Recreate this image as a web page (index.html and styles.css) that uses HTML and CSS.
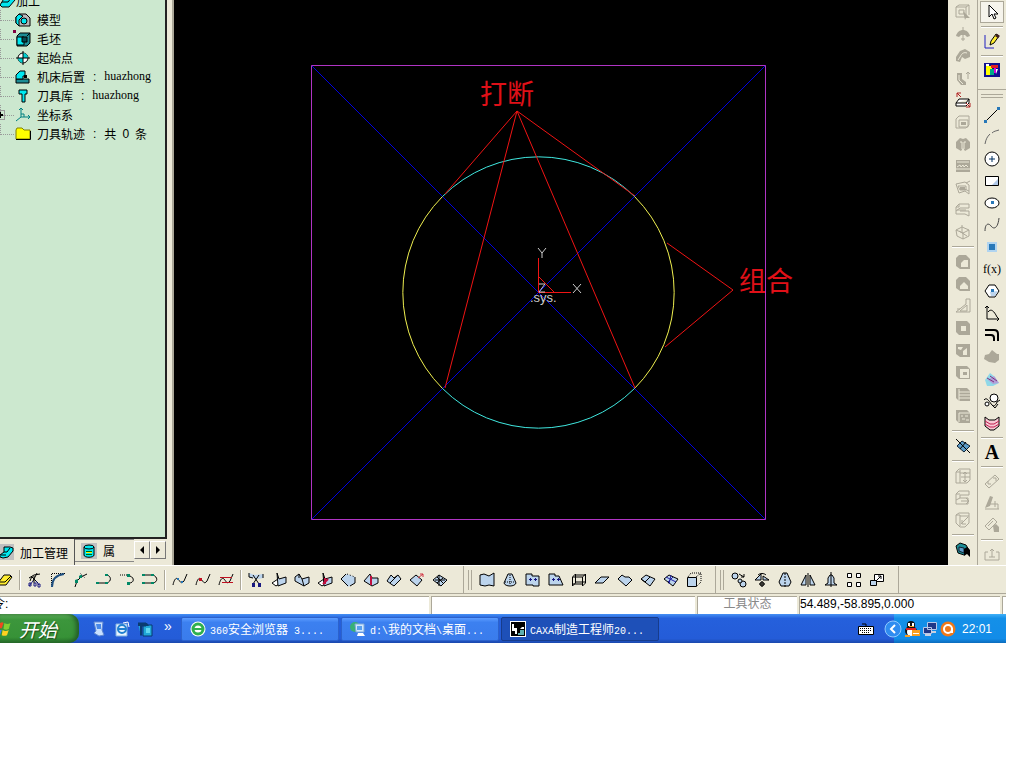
FILE: index.html
```html
<!DOCTYPE html>
<html lang="zh-CN">
  <head>
    <meta charset="utf-8">
    <title>CAXA制造工程师</title>
    <link rel="stylesheet" href="styles.css">
  </head>
  <body>
    <div class="screen">
      <div class="workspace">
        <aside class="panel">
          <ul class="tree">
            <li class="root">
              <svg viewBox="0 0 16 16"><path class="k cy" d="M0 12L5 4h7l3 3-6 7H2z"/><path class="k" d="M2 9h6l4-5"/></svg>
              <span>加工</span>
            </li>
            <li>
              <svg viewBox="0 0 16 16"><path class="k gr" d="M1 5l3-3h7l4 4v8H4l-3-3z"/><path class="k cy" d="M1 5l3-3 4 2-4 4v6l-3-3z"/><circle class="k cy" cx="9" cy="9" r="3"/></svg>
              <span>模型</span>
            </li>
            <li>
              <svg viewBox="0 0 16 16"><path class="k tl" d="M2 5l3-3h10v10l-3 3H2z"/><path class="k cy" d="M2 6h7v8H2z"/><path class="k dk" d="M7 6h5v5H7zM12 5l3-3"/><path fill="#800040" d="M-2-1h3v3h-3z"/></svg>
              <span>毛坯</span>
            </li>
            <li>
              <svg viewBox="0 0 16 16"><circle class="k wh" cx="8" cy="8" r="5"/><path fill="#00d0d0" d="M8 8V3a5 5 0 0 1 5 5zM8 8v5a5 5 0 0 1-5-5z"/><path class="k" d="M1 8h14M8 1v14"/></svg>
              <span>起始点</span>
            </li>
            <li>
              <svg viewBox="0 0 16 16"><path class="k tl" d="M1 10h13v4H1z"/><path class="k cy" d="M1 10V6l4-4h5v5H8v3z"/><path d="M9 6h3v3H9z"/></svg>
              <span>机床后置</span><span class="colon">:</span><span class="latin">huazhong</span>
            </li>
            <li>
              <svg viewBox="0 0 16 16"><path class="k cy" d="M4 2h8v4h-2v8H7V6H4z"/></svg>
              <span>刀具库</span><span class="colon">:</span><span class="latin">huazhong</span>
            </li>
            <li>
              <svg viewBox="0 0 16 16"><path fill="none" stroke="#008080" d="M6 1v9h9M6 10l-5 4M4 3l2-2 2 2M13 8l2 2-2 2M6 7h3v3"/></svg>
              <span>坐标系</span>
              <button class="expand" title="展开"><svg viewBox="0 0 8 8"><path d="M1 3h6v2H1zM3 1h2v6H3z"/></svg></button>
            </li>
            <li>
              <svg viewBox="0 0 16 16"><path fill="#ff0" stroke="#808000" d="M1 4l1-2h5l2 2h6v9H1z"/><path class="k" d="M1 13.500h14.500V5"/></svg>
              <span>刀具轨迹</span><span class="colon">:</span><span>共</span><span>0</span><span>条</span>
            </li>
          </ul>
          <div class="tabs">
            <button class="tab active">
              <svg class="boxed" viewBox="0 0 16 16"><path class="k cy" d="M2 11l4-3V3h6l3 1v3l-5 6-5 1-3-1z"/><path class="k" d="M6 8h3l3-4M3 11h5"/></svg>
              加工管理
            </button>
            <button class="tab">
              <svg class="boxed" viewBox="0 0 16 16"><path class="k cy" d="M3 4v8c0 3 10 3 10 0V4"/><ellipse class="k cy" cx="8" cy="4" rx="5" ry="2"/><path d="M5 8h6v1H5zM5 11h6v1H5z" fill="#060"/><path d="M5 9h6v1H5z" fill="#fe0"/></svg>
              属
            </button>
            <div class="tab-scroll">
              <button title="左"><svg viewBox="0 0 8 8"><path d="M6 0v8L2 4z"/></svg></button>
              <button title="右"><svg viewBox="0 0 8 8"><path d="M2 0v8l4-4z"/></svg></button>
            </div>
          </div>
        </aside>

        <main class="viewport">
          <svg class="drawing" viewBox="174 0 774 565">
            <g class="lines">
              <path stroke="#0000e0" d="M311.500 65.500l454 454M765.500 65.500l-454 454"/>
              <path stroke="#b034c4" d="M311.500 65.500h454v454h-454z"/>
              <path stroke="#f0f050" d="M442.500 196.500a136 136 0 0 0 0 192M634.500 196.500a136 136 0 0 1 0 192"/>
              <path stroke="#40e8e0" d="M442.500 196.500a136 136 0 0 1 192 0M442.500 388.500a136 136 0 0 0 192 0"/>
              <path stroke="#f01414" d="M445 194l72-83-72 277M517 111l118 277M517 111l118 85"/>
              <path stroke="#f01414" d="M667 243l66 47-68 57"/>
              <path stroke="#f01414" d="M538.500 258v34.500H571M538 276l16 16"/>
            </g>
            <text class="note" x="480" y="104">打断</text>
            <text class="note" x="739" y="291">组合</text>
            <g class="axis">
              <path d="M538 248l4 5 4-5M542 253v5M573 284l8 9M581 284l-8 9M539 284h6l-6 8h6"/>
              <text x="530" y="302">.sys.</text>
            </g>
          </svg>
        </main>

        <nav class="tools features">
          <button><svg viewBox="0 0 16 16"><path class="g" d="M1 3l3-2h10v10M1 3h10v10H1zM11 3l3-2M4 6h5v4H4z"/><path class="gf" d="M8 7l7 7h-4l-1 2z"/></svg></button>
          <button><svg viewBox="0 0 16 16"><path class="gf" d="M1 10c1-4 4-6 7-6s6 2 7 6l-3 1-2-2H6l-2 2z"/><path class="g" d="M8 1v14M6 13h4"/></svg></button>
          <button><svg viewBox="0 0 16 16"><path class="gf" d="M1 9l4-6 5-2 5 3v5l-5 2-3-2-2 5-4-1z"/><path class="w" d="M5 9c2-4 4-5 7-4M3 12l2-3"/></svg></button>
          <button><svg viewBox="0 0 16 16"><path class="gf" d="M2 3h5v6l4 3v3H6l-4-5z"/><path class="w" d="M4 5v5l4 4"/><path class="g" d="M13 9V2m-2 2l2-2 2 2"/></svg></button>
          <button><svg viewBox="0 0 16 16"><path class="k wh" d="M1 11l3-4h10l-3 4zM1 11v3h10l3-3V7"/><path fill="none" stroke="#b02020" d="M2 1l4 4M2 5V1h4M15 15l-4-4M15 11v4h-4"/></svg></button>
          <button><svg viewBox="0 0 16 16"><path class="g" d="M1 5l3-3h10v9l-3 3H1zM4 6h9v7H4z"/><path class="gf" d="M6 8h5v3H6z"/></svg></button>
          <button><svg viewBox="0 0 16 16"><path class="gf" d="M1 6l4-4 3 1 3-1 4 4v6l-5 3-2-3-2 3-5-3z"/><path class="w" d="M5 6h2v7M11 6H9v7"/></svg></button>
          <button><svg viewBox="0 0 16 16"><path class="gf" d="M1 2h14v12H1z"/><path class="w" d="M2 9l3-2 1 2 2-2 1 2 2-2 2 2M1 11h14M2 4h12"/></svg></button>
          <button><svg viewBox="0 0 16 16"><path class="g" d="M1 4l9-2 4 3v9l-4-3-6 2zM3 6h8v4H5zM11 3l4-2M7 8l7 3"/><path class="gf" d="M5 7h5v3H5z"/></svg></button>
          <button><svg viewBox="0 0 16 16"><path class="g" d="M1 5l3-3h10v4H5L1 9zM1 9v3h9l4 2V9H5M4 2v3H1M2 8h9"/></svg></button>
          <button><svg viewBox="0 0 16 16"><path class="g" d="M1 6l6-3 7 3v6l-6 3-6-3zM1 6l7 3 6-3M8 9v6M7 1v8M4 7l8 5"/></svg></button>
          <hr>
          <button><svg viewBox="0 0 16 16"><path class="gf" d="M1 4l3-3h7l4 4v10H5l-4-3z"/><path class="bg" d="M6 13V9l3-3h4v7z"/></svg></button>
          <button><svg viewBox="0 0 16 16"><path class="gf" d="M1 4l3-3h7l4 4v10H5l-4-3z"/><path class="bg" d="M5 13v-3l4-4 4 4v3z"/></svg></button>
          <button><svg viewBox="0 0 16 16"><path class="g" d="M1 14l10-8V1h4v13zM5 13l7-6v6zM2 11h3"/></svg></button>
          <button><svg viewBox="0 0 16 16"><path class="gf" d="M1 1h11l3 3v11H4l-3-3z"/><path class="bg" d="M6 6h5v5H6z"/></svg></button>
          <button><svg viewBox="0 0 16 16"><path class="gf" d="M1 2h14v13H5l-4-3z"/><path class="bg" d="M3 5h5L6 8 3 7zM8 9l4-3v7H8z"/></svg></button>
          <button><svg viewBox="0 0 16 16"><path class="gf" d="M1 2h11l3 3v10H4l-3-3z"/><path class="bg" d="M5 5h9v9H5z"/><path class="gf" d="M8 8h4v3H8z"/></svg></button>
          <button><svg viewBox="0 0 16 16"><path class="gf" d="M1 2h11l3 3v10H4l-3-3z"/><path class="w" d="M4 6h11M4 9h11M4 12h11M4 3v12"/></svg></button>
          <button><svg viewBox="0 0 16 16"><path class="gf" d="M1 2h11l3 3v10H4l-3-3z"/><path class="w" d="M4 5h11M6 8h2M10 8h3M7 11h3M11 12h3M4 5v9"/></svg></button>
          <hr>
          <button><svg viewBox="0 0 16 16"><path class="bl" d="M2 8l5-5 8 5-6 6z"/><path class="k" d="M1 1l14 14M11 4l-6 7"/></svg></button>
          <hr>
          <button><svg viewBox="0 0 16 16"><path class="g" d="M1 4l3-3h11v11l-3 3H1zM1 4h4M5 5h10M5 2v13M10 4v10M6 9h9M8 6l2-2 2 2M8 12l2 2 2-2"/></svg></button>
          <button><svg viewBox="0 0 16 16"><path class="g" d="M1 4l3-3h10v4H5v3h8v6H1zM1 4h4M5 8l-4 2M6 11h8M11 8l3 3-3 3"/></svg></button>
          <button><svg viewBox="0 0 16 16"><path class="g" d="M1 3l3-2h10v10l-4 4H5l-4-4zM1 3h4v11M5 4h9M6 12l7-7M7 8v4h4"/></svg></button>
          <hr>
          <button><svg viewBox="0 0 16 16"><path class="k tl" d="M1 4l4-3 6 2 3 5-5 5-6-2z"/><path class="bl" d="M4 5l5 1v5L4 9z"/><path d="M9 7l3-2 3 3v7l-3-3-3 2z"/></svg></button>
        </nav>

        <nav class="tools curves">
          <button class="pressed" title="选择"><svg viewBox="0 0 16 16"><path class="k wh" d="M5 1v12l3-3 2 5 2-1-2-4h4z"/></svg></button>
          <hr>
          <button><svg viewBox="0 0 16 16"><path fill="none" stroke="#2020c0" d="M1 2v13h9"/><path class="k ye" d="M6 12l1-4 5-7 3 2-5 7z"/><path stroke="#402020" stroke-width="3" d="M12 2l3 2"/></svg></button>
          <hr>
          <button><svg viewBox="0 0 16 16"><path fill="#101090" d="M0 1h16v14H0z"/><path fill="#ff0" d="M2 4h6v9H2z"/><path fill="#0a8" d="M6 7h4v6H6z"/><path fill="#e02020" d="M7 3h7v3H7z"/><path fill="#fff" d="M2 2h3v2H2zM11 7h3l-2 5z"/><path fill="#d0d" d="M10 6h2v5h-2z"/></svg></button>
          <span class="section-end"></span>
          <button><svg viewBox="0 0 16 16"><path class="k" d="M2 14L14 2"/><path class="nb" d="M0 13h3v3H0zM13 0h3v3h-3z"/></svg></button>
          <button><svg viewBox="0 0 16 16"><path fill="none" stroke="#666" d="M1 15c1-5 2-7 5-10M8 4c2-2 4-2 7-3"/></svg></button>
          <button><svg viewBox="0 0 16 16"><circle class="k wh" cx="8" cy="8" r="7"/><path stroke="#003060" d="M5 8h6M8 5v6"/></svg></button>
          <button><svg viewBox="0 0 16 16"><path class="k wh" d="M1.500 3.500h13v9h-13z"/><path fill="#b0c8e8" d="M8 12l6-6v6z"/></svg></button>
          <button><svg viewBox="0 0 16 16"><ellipse class="k wh" cx="8" cy="8" rx="7" ry="5"/><path class="nb" d="M7 6h3v3H7z"/></svg></button>
          <button><svg viewBox="0 0 16 16"><path fill="none" stroke="#444" d="M1 14c0-8 4-8 6-5 3 4 7 2 8-8"/></svg></button>
          <button><svg viewBox="0 0 16 16"><path fill="#b0d4f0" d="M3 3h10v10H3z"/><path class="nb" d="M5 5h6v6H5z"/></svg></button>
          <button class="fx">f(x)</button>
          <button><svg viewBox="0 0 16 16"><path class="k wh" d="M5 2h6l4 6-4 6H5L1 8z"/><path class="lb" d="M6 9l8-1-3 5H7z"/><path class="nb" d="M7 6h3v3H7z"/></svg></button>
          <button><svg viewBox="0 0 16 16"><path class="k" d="M3 1v13h12M1 3l2-2 2 2M13 12l2 2-2 2M4 7c3-4 6-1 9 5"/></svg></button>
          <button><svg viewBox="0 0 16 16"><path fill="none" stroke="#000" stroke-width="2" d="M1 3h9q4 0 4 4v7M1 8h6q3 0 3 3v3"/></svg></button>
          <button><svg viewBox="0 0 16 16"><path class="gf" d="M1 6l4-1 3-4 5 4h2v6l-4 3-6-1-5-3z"/></svg></button>
          <button><svg viewBox="0 0 16 16"><path fill="#90d8e8" d="M1 9l5-7 5 4 4 6-6 3H3z"/><path fill="#b0a0d8" d="M4 9l6-4 5 7-6 1z"/><path fill="none" stroke="#803080" d="M3 7l7 4M6 5l7 5"/></svg></button>
          <button><svg viewBox="0 0 16 16"><circle class="k wh" cx="10" cy="5" r="4"/><circle class="k wh" cx="3" cy="11" r="2"/><path class="k" d="M0 7c3-4 6 3 8 5s4 0 5-3l3-2M8 12l3 3 3-4"/></svg></button>
          <button><svg viewBox="0 0 16 16"><path class="k pk" d="M1 2l4 3h6l4-3v9l-5 4H6l-5-4z"/><path fill="none" stroke="#c02050" d="M1 6l5 3h4l5-3M1 9l5 3h4l5-3"/></svg></button>
          <hr>
          <button class="letter">A</button>
          <hr>
          <button><svg viewBox="0 0 16 16"><path class="g" d="M1 11l10-9 4 4-10 9zM4 8v3h3M9 5h3v3"/></svg></button>
          <button><svg viewBox="0 0 16 16"><path class="gf" d="M1 13L6 1l3 1-3 9z"/><path class="g" d="M1 14h14M6 9h8M14 9v5M11 6v6"/></svg></button>
          <button><svg viewBox="0 0 16 16"><path class="g" d="M1 9l8-8 4 4-8 8zM4 9l5-5"/><path class="gf" d="M9 9l3-2 3 3v5h-5z"/></svg></button>
          <hr>
          <button><svg viewBox="0 0 16 16"><path class="g" d="M1 6v8h14V6M1 6h3M12 6h3M8 3v8M6 5l2-2 2 2M5 11h6"/></svg></button>
        </nav>
      </div>

      <div class="toolbar">
        <div class="group first">
          <button><svg viewBox="0 0 16 16"><path class="k ye" d="M1 11l6-8h6l2 2-6 8H3z"/><path class="k" d="M2 10h6l6-6"/></svg></button>
          <i class="divider"></i>
          <button><svg viewBox="0 0 16 16"><path class="k" d="M10 1L6 9M2 6l5-3 6-1M5 5l6 6M7 4v7M3 9l2-5"/><path fill="none" stroke="#181880" d="M6 9l-4 5M9 9l3 4M2 11h2v3H2zM11 12h2v3h-2zM7 11h2v3H7z"/></svg></button>
          <button><svg viewBox="0 0 16 16"><path class="k" stroke-dasharray="1 1" d="M1.500 15V1.500H15"/><path fill="none" stroke="#205080" stroke-width="2" d="M2 15C2 8 6 3 14 2"/></svg></button>
          <button><svg viewBox="0 0 16 16"><path class="k" d="M2 15l2-6 4-4 6-3"/><path fill="#086" d="M2 8l3-1v4H2zM6 4l3-2v4H6z"/><path fill="none" stroke="#888" d="M7 1l5 5"/></svg></button>
          <button><svg viewBox="0 0 16 16"><path class="k" d="M1 11h10c5-2 4-7 0-8"/><path fill="#086" d="M0 10h3v2H0zM9 10h3v2H9zM9 2h3v2H9z"/></svg></button>
          <button><svg viewBox="0 0 16 16"><path class="k" stroke-dasharray="1 1" d="M1 3h8"/><path class="k" d="M11 4c5 2 4 7-1 7"/><path fill="#086" d="M8 2h3v3H8zM8 10h3v3H8z"/></svg></button>
          <button><svg viewBox="0 0 16 16"><path class="k" d="M1 3h10c5 2 5 7 0 8H1"/><path fill="#086" d="M0 2h3v2H0zM9 2h3v2H9zM0 10h3v2H0zM9 10h3v2H9z"/></svg></button>
          <i class="divider"></i>
          <button><svg viewBox="0 0 16 16"><path class="k" d="M1 13c1-5 3-8 5-6s3 6 6 2l3-7"/><path class="nb" d="M5 6h2v2H5zM9 9h2v2H9z"/></svg></button>
          <button><svg viewBox="0 0 16 16"><path class="k" d="M1 13c1-5 3-8 5-6s3 6 6 2l3-7"/><path fill="#c01020" d="M4 6h3v3H4z"/></svg></button>
          <button><svg viewBox="0 0 16 16"><path class="k" d="M1 13c1-5 3-8 5-6s3 6 6 2l3-7"/><path stroke="#c01020" d="M2 5.500h12M4 10.500h11"/></svg></button>
          <i class="divider"></i>
          <button><svg viewBox="0 0 16 16"><path class="lb" d="M1 1l6 2 8-1v4l-5 1-4-1-5-1z"/><path class="k" d="M1 1v4l4 1M15 2v4M5 3l6 9M11 3L5 12"/><path class="nv" d="M4 11h3v4H4zM10 11h3v4h-3z"/></svg></button>
          <button><svg viewBox="0 0 16 16"><path class="k wh" d="M1 11l6-4 1 5-3 2z"/><path class="k lb" d="M6 1l2 6 7-2v6l-8 3z"/></svg></button>
          <button><svg viewBox="0 0 16 16"><path class="k lb" d="M1 5l4-3 3 5 7-2v6l-5 3-9-5z"/><path class="k" d="M8 7l2 7M5 2v4"/></svg></button>
          <button><svg viewBox="0 0 16 16"><path class="k wh" d="M1 11l6-4 1 5-3 2z"/><path class="k lb" d="M6 1l2 6 7-2v6l-8 3z"/><path fill="none" stroke="#c01040" stroke-width="2" d="M8 6v6M6 12l5-5"/></svg></button>
          <button><svg viewBox="0 0 16 16"><path class="lb" d="M1 7l6-5 8 3v6l-7 4z"/><path class="k" d="M6 2L1 7l7 7M15 5v6l-5 3"/><path class="k" stroke-dasharray="1 2" d="M7 2l8 3"/></svg></button>
          <button><svg viewBox="0 0 16 16"><path class="k lb" d="M1 9l6-7 2 4 6 0v5l-6 3z"/><path stroke="#c01040" stroke-width="2" d="M8 4v9"/></svg></button>
          <button><svg viewBox="0 0 16 16"><path class="k lb" d="M1 9l4-6 3 3 4-3 3 4-7 7-3-2z"/><path class="k" d="M4 11l7-7"/></svg></button>
          <button><svg viewBox="0 0 16 16"><path class="k lb" d="M1 8l6-5 6 5-5 6z"/><path fill="none" stroke="#d03040" d="M9 6l5-4M11 2h3v3"/></svg></button>
          <button><svg viewBox="0 0 16 16"><path class="k lb" d="M1 8l6-5 8 5-6 6z"/><path class="k" d="M3 8h10M7 3v11M5 5l6 6M5 11l6-5"/></svg></button>
        </div>
        <div class="group">
          <button><svg viewBox="0 0 16 16"><path class="k lb" d="M1 3l4-1 5 2 5-3v13l-5-1-4 1-5-1z"/></svg></button>
          <button><svg viewBox="0 0 16 16"><path class="k lb" d="M6 2h4l4 9c-1 4-11 4-12 0z"/><path class="k" stroke-dasharray="1 1" d="M8 3v10M3 10h10"/></svg></button>
          <button><svg viewBox="0 0 16 16"><path class="k lb" d="M1 2h6v2h7v10H8v-1H1z"/><path class="nv" d="M4 7h3v1H4zM9 7h3v1H9zM5 6h1v3H5zM10 6h1v3h-1z"/></svg></button>
          <button><svg viewBox="0 0 16 16"><path class="k lb" d="M1 2h6v2h4l4 9H1z"/><path class="nv" d="M4 7h3v1H4zM9 7h3v1H9zM5 6h1v3H5zM10 6h1v3h-1z"/></svg></button>
          <button><svg viewBox="0 0 16 16"><path class="k" d="M1.500 14V5l3-3v9zM11.500 14V5l3-3v9zM2 5h9M5 3h9M5 10h9M2 12h9"/></svg></button>
          <button><svg viewBox="0 0 16 16"><path class="k lb" d="M1 11l6-6h8l-6 6z"/></svg></button>
          <button><svg viewBox="0 0 16 16"><path class="k lb" d="M1 7l4-4 3 2h4l3 3-6 6z"/></svg></button>
          <button><svg viewBox="0 0 16 16"><path class="k lb" d="M1 7l5-4 9 4-5 7z"/><path class="k" d="M5 10l5-5M1 7l4 3"/></svg></button>
          <button><svg viewBox="0 0 16 16"><path class="k lb" d="M1 7l5-4 9 4-5 7z"/><path fill="none" stroke="#2020a0" d="M3 5l10 5M5 10l5-5M8 3l-2 9"/></svg></button>
          <button><svg viewBox="0 0 16 16"><path class="k lb" d="M1.500 5.500h9v9h-9z"/><path class="k" stroke-dasharray="1 1" d="M2 5l3-4h10v9l-4 4M10 5l5-4"/></svg></button>
        </div>
        <div class="group">
          <button><svg viewBox="0 0 16 16"><circle class="k lb" cx="4" cy="4" r="3"/><circle class="k lb" cx="12" cy="12" r="3"/><circle class="k lb" cx="9" cy="9" r="2"/><path class="k" d="M8 2l5 3M13 2v3h-3"/></svg></button>
          <button><svg viewBox="0 0 16 16"><path class="k lb" d="M7 2v6H1zM9 4l6 4H9z"/><path class="k" d="M4 3c2-2 6-2 8 0"/><circle class="k" cx="8" cy="12" r="2"/><path class="k" d="M8 9v6M5 12h6"/></svg></button>
          <button><svg viewBox="0 0 16 16"><path class="k lb" d="M6 1h4l4 9-2 4H4l-2-4z"/><path class="k" stroke-dasharray="2 1" d="M8 1v14"/></svg></button>
          <button><svg viewBox="0 0 16 16"><path class="k lb" d="M6 3v10H1zM10 3v10h5z"/><path class="k" d="M8 1v14"/></svg></button>
          <button><svg viewBox="0 0 16 16"><path class="k lb" d="M7 3L5 6v5l-3 2h12l-3-2V6L9 3z"/><path class="k" d="M8 0v15"/></svg></button>
          <button><svg viewBox="0 0 16 16"><path class="k wh" d="M1.500 1.500h4v4h-4zM10.500 1.500h4v4h-4zM1.500 10.500h4v4h-4zM10.500 10.500h4v4h-4z"/></svg></button>
          <button><svg viewBox="0 0 16 16"><path class="k wh" d="M5.500 2.500h9v7h-9z"/><path class="k lb" d="M1.500 8.500h6v5h-6z"/><path class="k" d="M7 9l5-5M9 4h3v3"/></svg></button>
        </div>
      </div>

      <div class="statusbar">
        <label class="command">令:<input type="text" aria-label="命令"></label>
        <div class="field hint"></div>
        <div class="field state">工具状态</div>
        <div class="field coords">54.489,-58.895,0.000</div>
        <div class="field edge"></div>
      </div>

      <footer class="taskbar">
        <button class="start">
          <svg viewBox="0 0 16 20"><path fill="#f04820" d="M0 3c2-1 3-1 4 0l-2 6H0z"/><path fill="#80d030" d="M5 3c3 2 5 1 7 0l-2 7c-2 1-4 1-6 0z"/><path fill="#4080f0" d="M0 11h2l-2 6z"/><path fill="#ffd020" d="M3 11c3 2 5 1 7 0l-2 6c-2 1-4 1-6 0z"/></svg>
          开始
        </button>
        <div class="quick">
          <button title="桌面"><svg viewBox="0 0 16 16"><path fill="#c8e0ff" stroke="#6088d0" d="M3 1h9l-1 8 2 5-5 1-5-3 2-2z"/><path fill="#4888e8" d="M5 3h5v5H6z"/></svg></button>
          <button title="浏览器"><svg viewBox="0 0 16 16"><path fill="#e8f4ff" stroke="#80b0e0" d="M2 3h11v12H2z"/><circle cx="8" cy="8" r="4" fill="none" stroke="#2080d0" stroke-width="2"/><path stroke="#2080d0" stroke-width="2" d="M5 8h7"/><path fill="none" stroke="#fff" d="M9 2l5-1 1 5"/></svg></button>
          <button title="窗口"><svg viewBox="0 0 16 16"><path fill="#20a8d8" stroke="#063870" d="M1 2h8v3H4v10M6 4h9v11H6z"/><path fill="#0a3c70" d="M1 2h9l2 3H5v9H3V5H1z"/><path fill="#60d8f0" d="M9 7h4v5H9z"/></svg></button>
          <span class="more">»</span>
        </div>
        <div class="tasks">
          <button class="task">
            <svg viewBox="0 0 16 16"><circle cx="8" cy="8" r="7.500" fill="#fff"/><circle cx="8" cy="8" r="5" fill="none" stroke="#30b050" stroke-width="3"/><path stroke="#30b050" stroke-width="2" d="M3 8h10"/></svg>
            <span><b>360</b>安全浏览器<b> 3....</b></span>
          </button>
          <button class="task">
            <svg viewBox="0 0 16 16"><circle cx="5" cy="6" r="5" fill="#38b078"/><path fill="#d0e8ff" stroke="#80a8d8" d="M5 3h9v8H6z"/><path fill="#58a0f0" d="M7 5h5v4H7z"/><path fill="#fff" d="M8 12h5l2 3H7z"/></svg>
            <span><b>d:\</b>我的文档<b>\</b>桌面<b>...</b></span>
          </button>
          <button class="task current">
            <svg viewBox="0 0 16 16"><path fill="#fff" d="M0 0h16v16H0z"/><path d="M1 1h14v14H1z"/><path fill="#fff" d="M2 3h2v4h3v6H5v-3H2zM10 8h4V6h-2z"/><path fill="#60b0b0" d="M10 9h4v5H8v-2h2z"/></svg>
            <span><b>CAXA</b>制造工程师<b>20...</b></span>
          </button>
        </div>
        <svg class="keyboard" viewBox="0 0 16 16"><path fill="#fff" stroke="#000" d="M.5 5.500h15v8H.5z"/><path stroke="#000" stroke-dasharray="1 1" d="M2 7.500h12M2 9.500h12M4 11.500h8"/><path class="k" d="M8 5V3H4"/></svg>
        <div class="tray">
          <button class="collapse" title="隐藏"><svg viewBox="0 0 18 18"><circle cx="9" cy="9" r="8" fill="#2f8cf0" stroke="#90c8ff"/><path fill="none" stroke="#fff" stroke-width="2" d="M11 5L7 9l4 4"/></svg></button>
          <svg viewBox="0 0 16 16"><ellipse cx="7" cy="10" rx="6" ry="5" fill="#111"/><circle cx="7" cy="4" r="4" fill="#111"/><ellipse cx="7" cy="11" rx="4" ry="4" fill="#fff"/><path fill="#fff" d="M4 2h2v3H4zM8 2h2v3H8z"/><path fill="#e02020" d="M2 7h10v2H2z"/><path fill="#f8a020" d="M5 5h5v1H5zM1 14h5v2H1zM8 9h8v6H8z"/><path stroke="#fff" d="M9 12.500h6"/></svg>
          <svg viewBox="0 0 16 16"><path fill="#203888" stroke="#b8c8e8" d="M5.500 1.500h9v7h-9zM1.500 6.500h8v6h-8z"/><path fill="#c8d0e0" d="M3 13h6v2H3zM9 10h5v2H9z"/></svg>
          <svg viewBox="0 0 16 16"><circle cx="8" cy="8" r="7.500" fill="#f07818"/><circle cx="8" cy="8" r="4" fill="none" stroke="#fff" stroke-width="2"/><path fill="#fff" d="M11 7h2v5h-2z"/></svg>
          <time>22:01</time>
        </div>
      </footer>
    </div>
  </body>
</html>
```

FILE: styles.css
```css
body {
  margin: 0;
  background-color: #fff;
  font-family: "Liberation Sans", "Noto Sans CJK SC", sans-serif;
  font-size: 12px;
  color: #000;
}

button {
  margin: 0;
  padding: 0;
  border: none;
  background: none;
  font: inherit;
  color: inherit;
}

svg {
  display: block;
  flex: none;
}

.screen {
  margin-right: 18px;
  background-color: #ece9d8;
  overflow: hidden;
}

.workspace {
  display: flex;
}

/* icon colours */
.k { fill: none; stroke: #000; }
.k.cy { fill: #00e8f0; }
.k.tl { fill: #1c8c94; }
.k.dk { fill: #064850; }
.k.gr { fill: #b8b8b8; }
.k.wh { fill: #fff; }
.k.ye { fill: #ffee30; }
.k.pk { fill: #f8c8d4; }
.lb,
.k.lb { fill: #bcd4ec; }
.bl { fill: #5c9cc8; stroke: #123; }
.nb { fill: #2878b8; }
.nv { fill: #181880; }
.g { fill: none; stroke: #aca899; }
.gf { fill: #aca899; }
.w { fill: none; stroke: #ece9d8; }
.bg { fill: #ece9d8; }

/* left panel */
.panel {
  display: flex;
  flex-direction: column;
  flex: none;
  width: 167px;
  margin-right: 5px;
}

.tree {
  flex: 1;
  margin: 0;
  padding: 0;
  list-style: none;
  background-color: #cce8cf;
  border-right: 2px solid #222;
  border-bottom: 2px solid #222;
  overflow: hidden;
}

.tree li {
  display: flex;
  align-items: center;
  position: relative;
  gap: 6px;
  height: 19px;
  padding-left: 15px;
  white-space: nowrap;
}

.tree li::before {
  content: "";
  position: absolute;
  left: 0;
  top: 0;
  width: 13px;
  height: 10px;
  border-left: 1px dotted #999;
  border-bottom: 1px dotted #999;
}

.tree .root {
  margin-top: -9px;
  padding-left: 0;
  gap: 0;
}

.tree .root::before {
  display: none;
}

.tree svg {
  width: 16px;
  height: 16px;
  overflow: visible;
}

.colon {
  margin: 0 2px;
}

.latin {
  font-family: "Liberation Serif", serif;
}

.expand {
  position: absolute;
  left: -5px;
  top: 5px;
  border: 1px solid #999;
}

.tree .expand svg {
  width: 8px;
  height: 8px;
}

.tabs {
  display: flex;
  height: 26px;
}

.tab {
  display: flex;
  align-items: center;
  gap: 6px;
  white-space: nowrap;
}

.tab svg {
  width: 16px;
  height: 16px;
}

.tab.active {
  width: 77px;
  margin-left: -2px;
  border-right: 1px solid #555;
}

.tab:not(.active) {
  width: 59px;
  height: 23px;
  padding-left: 6px;
  border-top: 1px solid #888;
  border-bottom: 1px solid #888;
  box-sizing: border-box;
}

.tab .boxed {
  background-color: #c0c0c0;
}

.tab-scroll {
  display: flex;
  height: 18px;
  margin-top: 2px;
}

.tab-scroll button {
  display: flex;
  align-items: center;
  justify-content: center;
  width: 16px;
  border: 1px solid;
  border-color: #fff #777 #777 #fff;
  box-sizing: border-box;
}

.tab-scroll svg {
  width: 8px;
  height: 8px;
}

/* drawing area */
.viewport {
  flex: 1;
  min-width: 0;
  background-color: #000;
  border-left: 2px solid #aca899;
}

.drawing {
  width: 100%;
}

.lines {
  fill: none;
}

.note {
  font-family: "Noto Sans CJK SC", sans-serif;
  font-size: 27px;
  fill: #e01018;
}

.axis path {
  fill: none;
  stroke: #ccc;
}

.axis text {
  font-size: 13px;
  fill: #ccc;
}

/* vertical toolbars */
.tools {
  display: flex;
  flex-direction: column;
  align-items: center;
  flex: none;
  width: 29px;
  padding-top: 1px;
  box-sizing: border-box;
}

.tools button {
  display: flex;
  align-items: center;
  justify-content: center;
  width: 24px;
  height: 22px;
}

.tools svg,
.toolbar svg {
  width: 16px;
  height: 16px;
}

.tools hr {
  width: 22px;
  height: 0;
  margin: 3px 0;
  border: none;
  border-top: 1px solid #aca899;
  border-bottom: 1px solid #fff;
}

.curves {
  border-left: 1px solid #aca899;
}

.curves hr {
  margin: 3px 0 2px;
}

.tools .pressed {
  background-color: #f6f4ec;
  border: 1px solid #aca899;
  box-sizing: border-box;
}

.section-end {
  align-self: stretch;
  height: 4px;
  margin-top: 8px;
  padding: 2px 3px 8px;
  border-top: 1px solid #aca899;
}

.section-end::after {
  content: "";
  display: block;
  height: 2px;
  margin-top: 2px;
  border-top: 1px solid #aca899;
  border-bottom: 1px solid #aca899;
}

.tools .fx {
  font-family: "Liberation Serif", serif;
}

.tools .letter {
  font-family: "Liberation Serif", serif;
  font-size: 20px;
  font-weight: bold;
}

/* bottom toolbar */
.toolbar {
  display: flex;
  height: 27px;
  border-top: 1px solid #fff;
  border-bottom: 1px solid #aca899;
}

.group {
  display: flex;
  align-items: center;
  padding-right: 10px;
  border-right: 1px solid #aca899;
}

.group:not(.first)::before {
  content: "";
  width: 2px;
  height: 20px;
  margin: 0 3px 0 4px;
  border-left: 1px solid #aca899;
  border-right: 1px solid #aca899;
}

.group button {
  display: flex;
  align-items: center;
  justify-content: center;
  width: 23px;
  height: 23px;
}

.first {
  margin-left: -7px;
  padding-right: 12px;
}

.divider {
  width: 1px;
  height: 20px;
  margin: 0 2px 0 3px;
  border-right: 1px solid #fff;
  background-color: #aca899;
}

/* status bar */
.statusbar {
  display: flex;
  gap: 2px;
  height: 20px;
  padding-top: 2px;
  box-sizing: border-box;
  line-height: 15px;
}

.command,
.field {
  background-color: #fff;
  border-top: 1px solid #aca899;
  box-sizing: border-box;
  white-space: nowrap;
  overflow: hidden;
}

.field {
  border-left: 1px solid #aca899;
}

.command {
  display: flex;
  flex: 430;
  text-indent: -7px;
}

.command input {
  flex: 1;
  min-width: 0;
  border: none;
  outline: none;
  background: none;
}

.hint {
  flex: 263;
}

.state {
  width: 100px;
  color: #888;
  text-align: center;
}

.coords {
  width: 201px;
}

.edge {
  width: 4px;
}

/* taskbar */
.taskbar {
  display: flex;
  align-items: center;
  height: 29px;
  background: linear-gradient(#4590f4, #2560dc 15%, #245cd8 85%, #1b48ac);
  color: #fff;
}

.start {
  display: flex;
  align-items: center;
  gap: 5px;
  width: 79px;
  height: 29px;
  margin-right: 12px;
  border-radius: 0 10px 10px 0;
  background: linear-gradient(#62b45e, #3c963c 20%, #379237 80%, #27702a);
  box-shadow: inset -3px 0 4px #245c28;
  font-size: 19px;
  font-style: italic;
  text-shadow: 1px 1px 1px #1c4c1c;
  white-space: nowrap;
}

.start svg {
  width: 14px;
  height: 20px;
}

.quick {
  display: flex;
  align-items: center;
  gap: 7px;
  width: 90px;
}

.quick svg,
.task svg,
.tray svg,
.keyboard {
  width: 16px;
  height: 16px;
}

.more {
  align-self: flex-start;
  margin-left: 4px;
  font-size: 14px;
  line-height: 10px;
}

.tasks {
  display: flex;
  flex: 1;
  gap: 2px;
}

.task {
  display: flex;
  align-items: center;
  gap: 4px;
  width: 158px;
  height: 24px;
  padding-left: 8px;
  border: 1px solid #2c62cc;
  border-radius: 2px;
  background: linear-gradient(#5c9cff, #3c80f0 20%, #3a7cec);
  box-sizing: border-box;
  white-space: nowrap;
}

.task b {
  font-family: "Liberation Mono", monospace;
  font-size: 10px;
  font-weight: normal;
  white-space: pre;
}

.current {
  border-color: #173c8c;
  background: #1e50b8;
}

.keyboard {
  margin-right: 20px;
}

.tray {
  display: flex;
  align-items: center;
  gap: 2px;
  width: 112px;
  height: 29px;
  background: linear-gradient(#40b0f8, #1490e8 15%, #128ce8 85%, #0c6cbc);
}

.tray .collapse {
  margin-left: -10px;
}

.tray .collapse svg {
  width: 18px;
  height: 18px;
}

.tray time {
  margin-left: 4px;
}
```
